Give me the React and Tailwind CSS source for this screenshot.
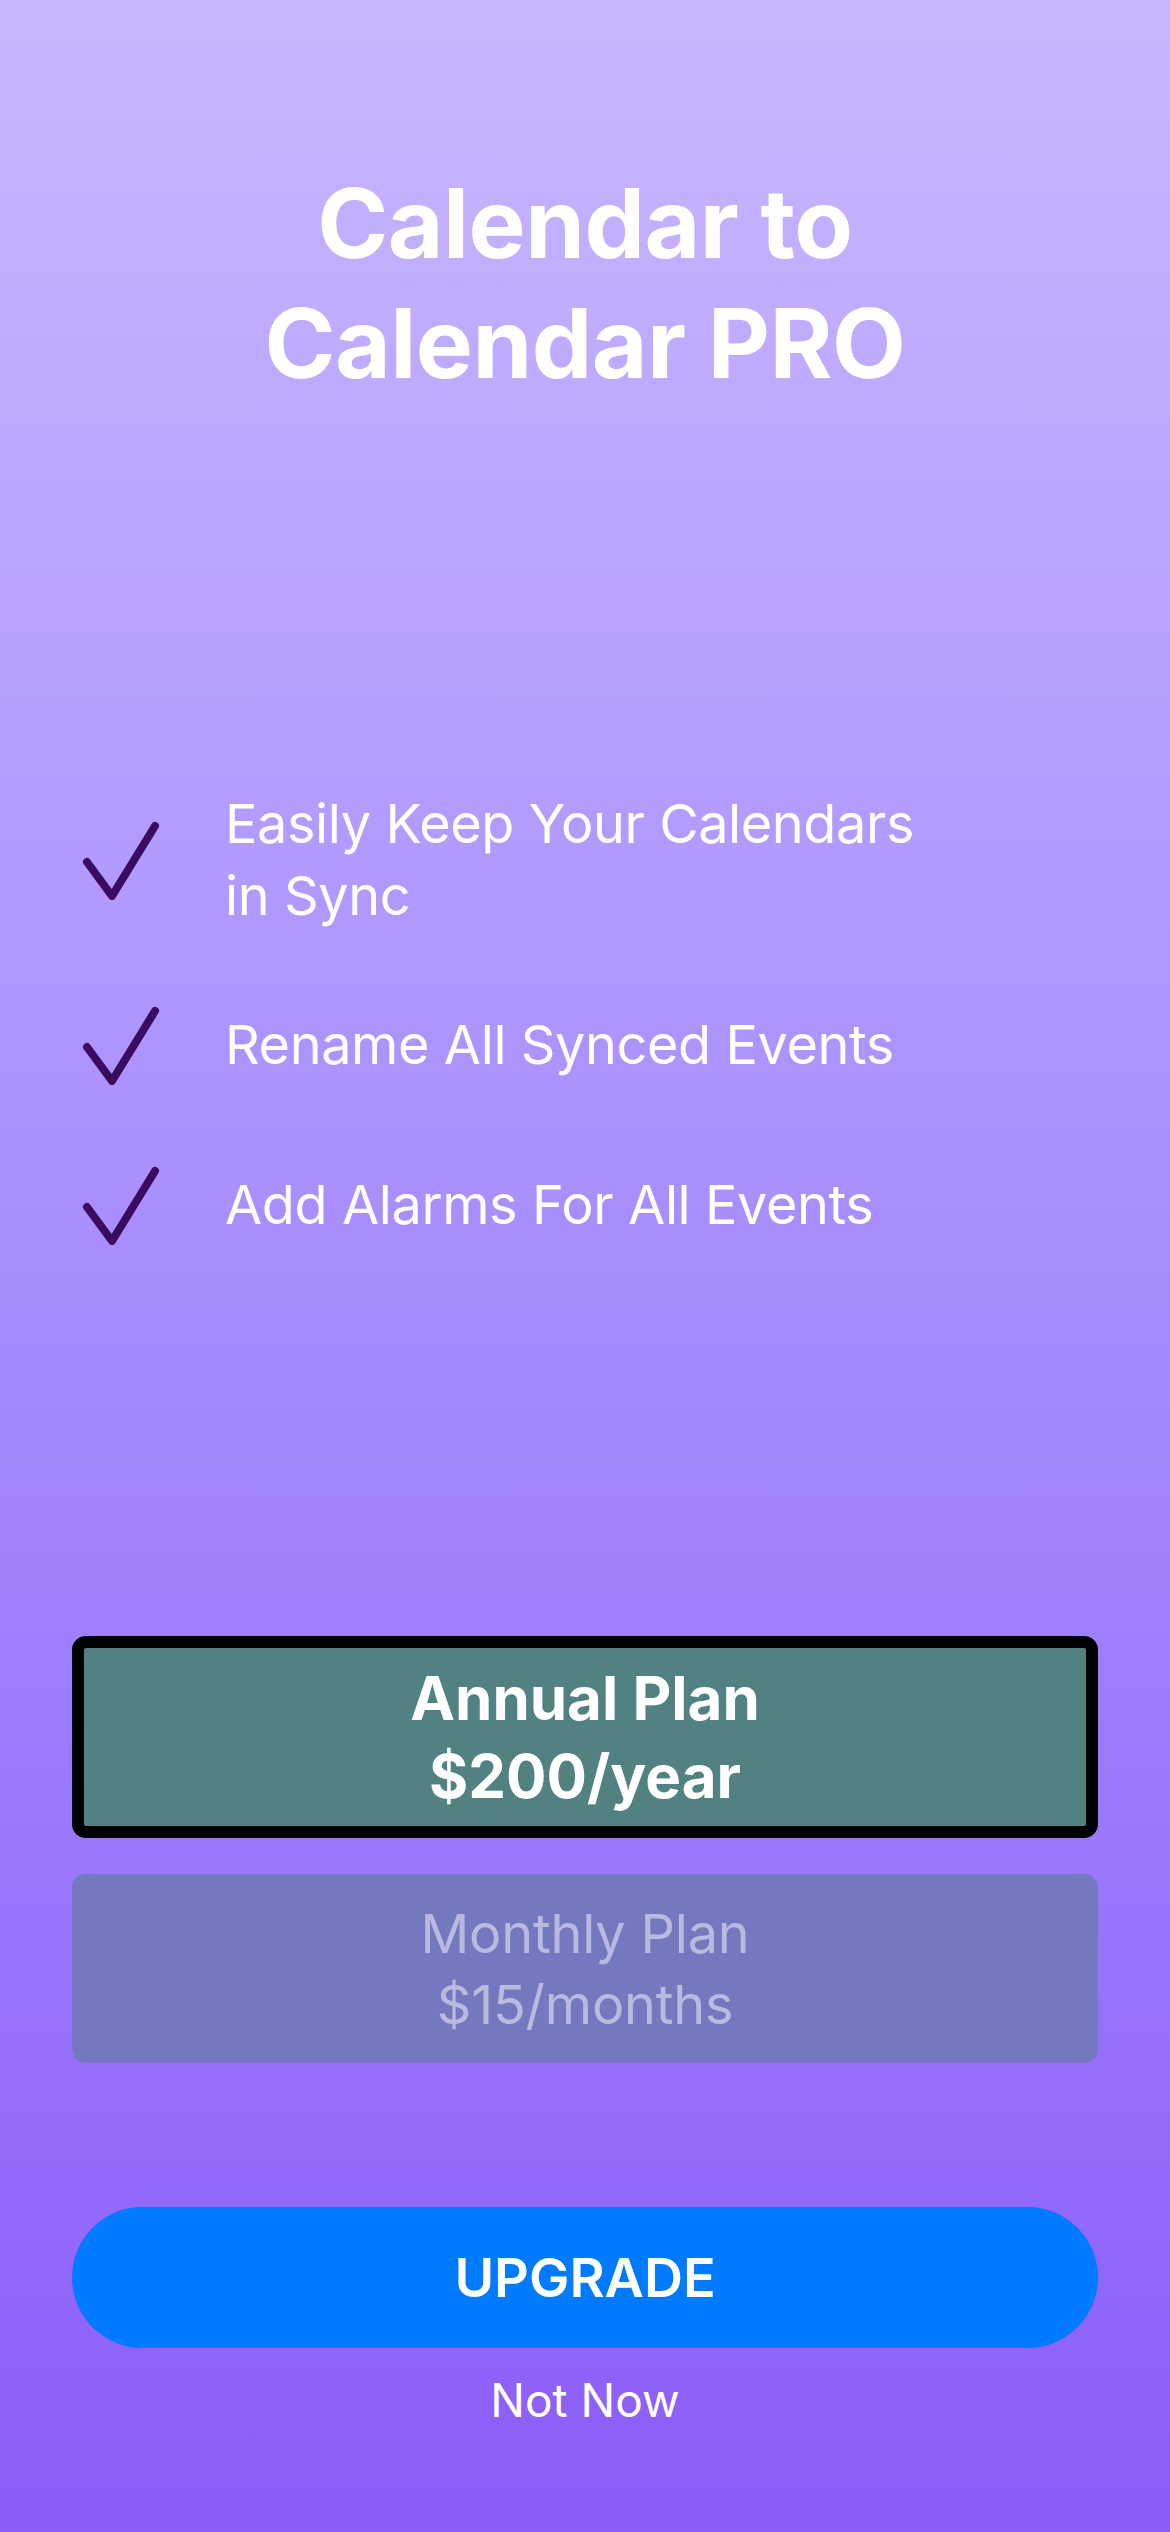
import React from "react";

const features = [
  { id: "sync", lines: ["Easily Keep Your Calendars", "in Sync"], gap: "mt-0" },
  { id: "rename", lines: ["Rename All Synced Events"], gap: "mt-[77px]" },
  { id: "alarms", lines: ["Add Alarms For All Events"], gap: "mt-[88px]" },
];

const Check = () => (
  <svg width="80" height="80" viewBox="0 0 80 80" fill="none" className="shrink-0 -my-[4px]">
    <path
      d="M7 42 L32 76 L75 6"
      stroke="#3b0b5f"
      strokeWidth="8"
      strokeLinecap="round"
      strokeLinejoin="round"
    />
  </svg>
);

const App = () => {
  return (
    <div
      className="min-h-[2532px] w-[1170px] bg-linear-to-b from-[#c8b7ff] to-[#8b5cf8] text-white flex flex-col px-[72px] pt-[163px]"
      style={{ fontFamily: "Inter, 'Liberation Sans', sans-serif" }}
    >
      <h1 className="text-center font-bold text-[96px] leading-[120px] tracking-[-0.5px]">
        Calendar to
        <br />
        Calendar PRO
      </h1>

      <div className="mt-[385px] flex flex-col">
        {features.map((f) => (
          <div key={f.id} className={`flex items-center ${f.gap}`}>
            <div className="w-[153px] pl-[8px] flex items-center">
              <Check />
            </div>
            <p className="text-[54px] leading-[72px] font-normal tracking-[-0.4px]">
              {f.lines.map((l, i) => (
                <span key={i} className="block">
                  {l}
                </span>
              ))}
            </p>
          </div>
        ))}
      </div>

      <button className="mt-[395px] h-[202px] w-full rounded-[14px] border-[12px] border-black bg-[#518180] flex flex-col items-center justify-center font-bold text-[60px] leading-[78px] text-white">
        <span>Annual Plan</span>
        <span>$200/year</span>
      </button>

      <button className="mt-[36px] h-[189px] w-full rounded-[14px] bg-[#7478be] flex flex-col items-center justify-center text-[54px] leading-[71px] text-[#b9bae0] tracking-[-0.2px]">
        <span>Monthly Plan</span>
        <span>$15/months</span>
      </button>

      <button className="mt-[144px] h-[141px] w-full rounded-full bg-[#007aff] text-white font-semibold text-[54px] leading-none">
        UPGRADE
      </button>

      <p className="mt-[24px] text-center text-[46px] leading-[56px]">Not Now</p>
    </div>
  );
};

export default App;
